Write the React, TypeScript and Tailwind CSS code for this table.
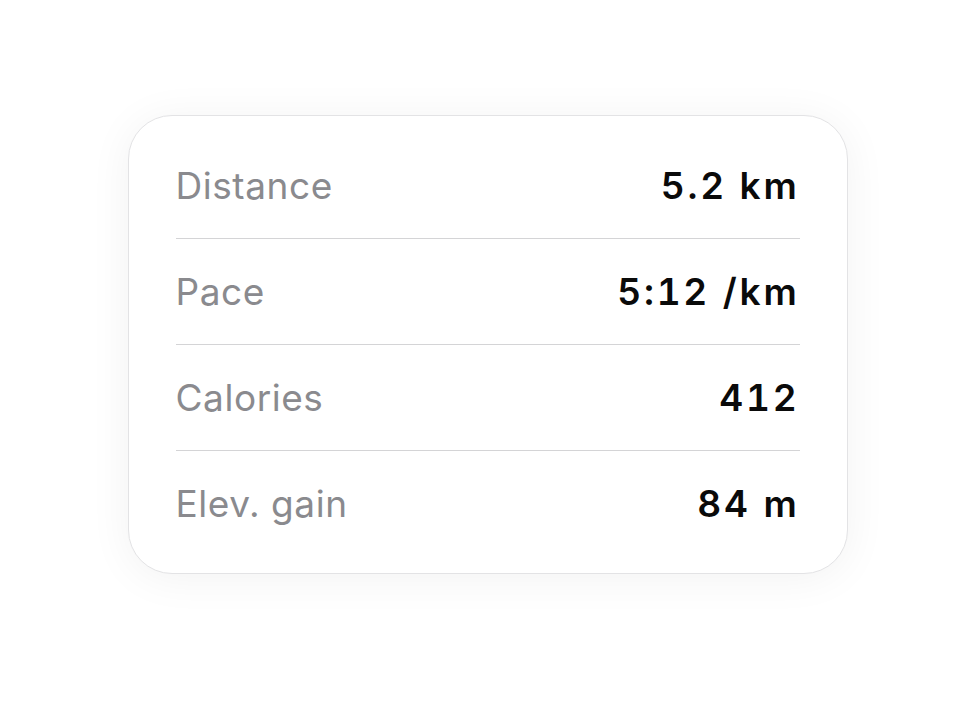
import React from 'react'

const stats = [
  { label: 'Distance', value: '5.2 km' },
  { label: 'Pace', value: '5:12 /km' },
  { label: 'Calories', value: '412' },
  { label: 'Elev. gain', value: '84 m' },
]

const App = () => {
  return (
    <div className="min-h-[715px] bg-white flex justify-center pt-[115px] font-['Inter',sans-serif]">
      <div className="w-[720px] h-fit bg-white border border-[#e3e3e5] rounded-[44px] px-[47px] py-[17px] shadow-[0_4px_44px_rgba(0,0,0,0.055)]">
        {stats.map((s, i) => (
          <div
            key={s.label}
            className={`flex flex-row justify-between items-center ${i < stats.length - 1 ? 'h-[106px] border-b border-[#d4d4d6]' : 'h-[105px]'}`}
          >
            <span className="text-[37px] tracking-[0.015em] text-[#8a8a8e]">{s.label}</span>
            <span className="text-[37px] font-semibold tabular-nums tracking-[0.075em] text-[#0a0a0a]">{s.value}</span>
          </div>
        ))}
      </div>
    </div>
  )
}

export default App
